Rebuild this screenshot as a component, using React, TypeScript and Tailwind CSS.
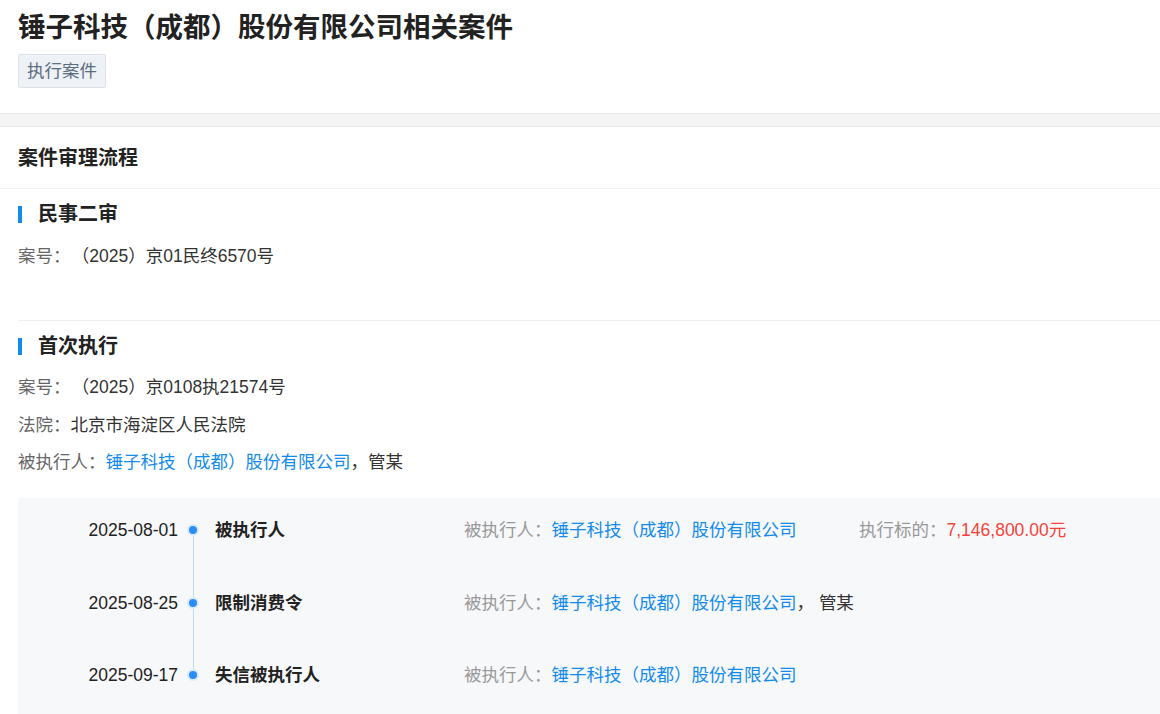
import React from 'react';

const company = '锤子科技（成都）股份有限公司';

const events = [
  { date: '2025-08-01', title: '被执行人', others: '', amount: '7,146,800.00元' },
  { date: '2025-08-25', title: '限制消费令', others: '管某', amount: '' },
  { date: '2025-09-17', title: '失信被执行人', others: '', amount: '' },
];

const SectionTitle = ({ children }: { children: React.ReactNode }) => (
  <div className="flex items-center">
    <span className="w-[4px] h-[17px] bg-[#128bed]" />
    <h3 className="ml-[16px] text-[20px] leading-[24px] font-bold text-[#222]">{children}</h3>
  </div>
);

const App = () => {
  return (
    <div className="w-[1160px] h-[714px] overflow-hidden bg-white text-[17.5px] text-[#333] font-['Liberation_Sans','Noto_Sans_CJK_SC',sans-serif]">
      {/* header */}
      <div className="pl-[18px] pt-[10px] pb-[25px]">
        <h1 className="text-[27.5px] leading-[36px] font-bold text-[#222]">{company}相关案件</h1>
        <div className="mt-[8px] inline-block px-[8px] leading-[32px] border border-[#dde2ea] bg-[#eef1f6] rounded-[2px] text-[#5b6b80]">
          执行案件
        </div>
      </div>

      <div className="h-[14px] bg-[#f4f4f4] border-y border-[#e8e8e8]" />

      <div className="h-[62px] pl-[18px] flex items-center border-b border-[#f0f0f0]">
        <h2 className="text-[20px] font-bold text-[#222]">案件审理流程</h2>
      </div>

      <div className="pl-[18px]">
        {/* 民事二审 */}
        <div className="pt-[13px] pb-[52px] border-b border-[#eeeeee]">
          <SectionTitle>民事二审</SectionTitle>
          <div className="mt-[18px] leading-[24px]">
            <span className="text-[#666]">案号：</span>
            <span className="ml-[10px]">（2025）京01民终6570号</span>
          </div>
        </div>

        {/* 首次执行 */}
        <div className="pt-[13px]">
          <SectionTitle>首次执行</SectionTitle>
          <div className="mt-[17px] leading-[24px]">
            <span className="text-[#666]">案号：</span>
            <span className="ml-[10px]">（2025）京0108执21574号</span>
          </div>
          <div className="mt-[14px] leading-[24px]">
            <span className="text-[#666]">法院：</span>北京市海淀区人民法院
          </div>
          <div className="mt-[13px] leading-[24px]">
            <span className="text-[#666]">被执行人：</span>
            <span className="text-[#128bed]">{company}</span>，管某
          </div>

          <div className="mt-[24px] bg-[#f7f8fa] rounded-[2px] pt-[20px] pb-[20px]">
            {events.map((e, i) => (
              <div key={e.date} className="flex h-[72.5px]">
                <div className="w-[160px] text-right leading-[24px] text-[#222]">{e.date}</div>
                <div className="ml-[8px] w-[14px] flex flex-col items-center">
                  <span className={`h-[6px] w-px ${i === 0 ? 'bg-transparent' : 'bg-[#bcdafb]'}`} />
                  <span className="w-[12px] h-[12px] rounded-full bg-[#d9eafc] flex items-center justify-center">
                    <span className="w-[8px] h-[8px] rounded-full bg-[#2a8ef5]" />
                  </span>
                  <span className={`flex-1 w-px ${i === events.length - 1 ? 'bg-transparent' : 'bg-[#bcdafb]'}`} />
                </div>
                <div className="ml-[15px] w-[249px] leading-[24px] font-bold text-[#222]">{e.title}</div>
                <div className="w-[395px] leading-[24px]">
                  <span className="text-[#999]">被执行人：</span>
                  <span className="text-[#128bed]">{company}</span>
                  {e.others && <span>， {e.others}</span>}
                </div>
                {e.amount && (
                  <div className="leading-[24px]">
                    <span className="text-[#999]">执行标的：</span>
                    <span className="text-[#f5433a]">{e.amount}</span>
                  </div>
                )}
              </div>
            ))}
          </div>
        </div>
      </div>
    </div>
  );
};

export default App;
